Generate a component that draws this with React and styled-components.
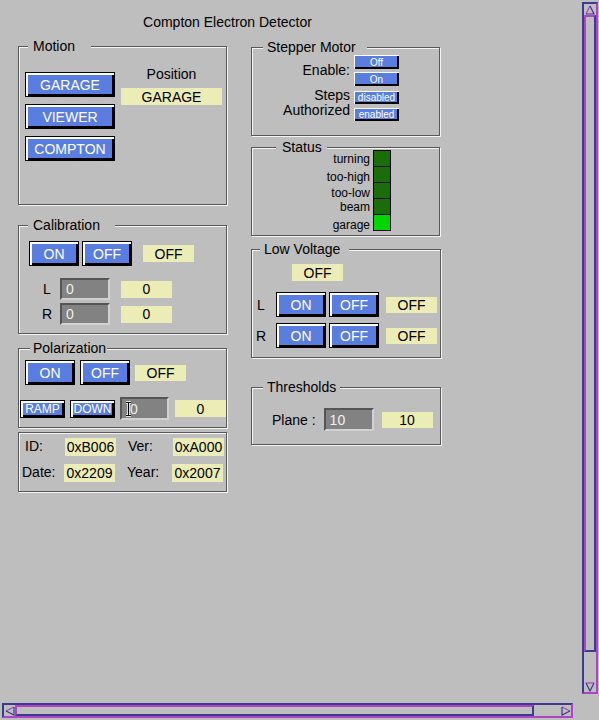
import styled, { createGlobalStyle } from "styled-components";

const NAVY = "#3b3b91";
const PINK = "#b044c4";

const GlobalStyle = createGlobalStyle`
  html, body {
    margin: 0;
    padding: 0;
    background: #bebebe;
  }
  body {
    font-family: "Liberation Sans", Arial, sans-serif;
    overflow: hidden;
  }
`;

const Screen = styled.div`
  width: 599px;
  height: 720px;
  background: #bebebe;
  display: grid;
  grid-template-columns: 582px 17px;
  grid-template-rows: 703px 17px;
  overflow: hidden;
  color: #000;
  font-size: 14px;
`;

const Panel = styled.div`
  grid-column: 1;
  grid-row: 1;
`;

const Title = styled.div`
  width: 455px;
  padding-top: 14px;
  line-height: 16px;
  text-align: center;
`;

const Columns = styled.div`
  display: flex;
  align-items: flex-start;
  gap: 24px;
  padding-left: 18px;
  margin-top: 16px;
`;

const Column = styled.div`
  display: flex;
  flex-direction: column;
  margin-top: ${p => p.$mt || 0}px;
`;

const Group = styled.div`
  position: relative;
  box-sizing: border-box;
  width: ${p => p.$w}px;
  height: ${p => p.$h}px;
  margin-top: ${p => p.$mt || 0}px;
  padding: ${p => p.$pad};
  border: 1px solid #585858;
  box-shadow: 1px 1px 0 #f4f4f4, inset 1px 1px 0 #f4f4f4;
`;

const Legend = styled.span`
  position: absolute;
  top: -9px;
  left: ${p => p.$x}px;
  padding: 0 ${p => p.$pr}px 0 ${p => p.$pl}px;
  background: #bebebe;
  line-height: 16px;
  white-space: nowrap;
`;

const Btn = styled.button`
  box-sizing: border-box;
  width: ${p => p.$w}px;
  height: ${p => p.$h}px;
  padding: 0;
  display: flex;
  align-items: center;
  justify-content: center;
  flex-shrink: 0;
  background: #5a7de0;
  color: #fff;
  font-family: inherit;
  font-size: ${p => p.$fs || 14}px;
  border: 1px solid #000;
  border-radius: 0;
  box-shadow: inset 2px 2px 0 #fff, inset -2px -2px 0 #000;
`;

const SmallBtn = styled(Btn)`
  border: none;
  font-size: 10px;
  box-shadow: inset 1px 1px 0 #fff, inset -2px -2px 0 #000;
`;

const Readout = styled.div`
  box-sizing: border-box;
  width: ${p => p.$w || 51}px;
  height: ${p => p.$h || 17}px;
  margin-left: ${p => p.$ml || 0}px;
  flex-shrink: 0;
  display: flex;
  align-items: center;
  justify-content: center;
  background: #ececb6;
`;

const Entry = styled.div`
  box-sizing: border-box;
  width: ${p => p.$w || 50}px;
  height: ${p => p.$h || 22}px;
  margin-left: ${p => p.$ml || 0}px;
  flex-shrink: 0;
  display: flex;
  align-items: center;
  padding-left: 4px;
  background: #828282;
  color: #f0f0f0;
  border: 2px solid;
  border-color: #555 #d2d2d2 #d2d2d2 #555;
`;

const Row = styled.div`
  display: flex;
  align-items: center;
  gap: ${p => p.$gap || 0}px;
  margin-top: ${p => p.$mt || 0}px;
  margin-left: ${p => p.$ml || 0}px;
`;

const RowLabel = styled.div`
  width: ${p => p.$w}px;
  text-align: center;
  flex-shrink: 0;
`;

/* Motion */
const MotionBody = styled.div`
  display: flex;
  align-items: flex-start;
  gap: 6px;
`;

const BtnStack = styled.div`
  display: flex;
  flex-direction: column;
  gap: ${p => p.$gap}px;
`;

const PositionCol = styled.div`
  display: flex;
  flex-direction: column;
  align-items: center;
  gap: 6px;
  margin-top: -6px;
  line-height: 16px;
`;

/* Stepper */
const StepperGrid = styled.div`
  display: grid;
  grid-template-columns: 98px 45px;
  column-gap: 4px;
  row-gap: 5px;
`;

const StepLabel = styled.div`
  text-align: right;
  line-height: 15px;
  align-self: ${p => (p.$top ? "start" : "center")};
  margin-top: ${p => (p.$top ? -3 : 0)}px;
`;

/* Status */
const StatusBody = styled.div`
  display: flex;
  gap: 3px;
`;

const StatusLabels = styled.div`
  width: 118px;
  display: flex;
  flex-direction: column;
  text-align: right;
  font-size: 12px;
`;

const StatusLabel = styled.div`
  height: ${p => p.$h}px;
  line-height: ${p => p.$h}px;
`;

const Leds = styled.div`
  display: flex;
  flex-direction: column;
`;

const Led = styled.div`
  box-sizing: border-box;
  width: 18px;
  height: 17px;
  border: 1px solid #000;
  background: ${p => (p.$on ? "#00d600" : "#1a6e0a")};
  & + & {
    margin-top: -1px;
  }
`;

/* ID box */
const IdGrid = styled.div`
  display: grid;
  grid-template-columns: 42px 51px 58px 51px;
  row-gap: 8px;
  align-items: center;
`;

const IdLabel = styled.div`
  padding-left: ${p => p.$pl || 0}px;
  margin-top: -2px;
`;

/* scrollbars */
const VBar = styled.div`
  grid-column: 2;
  grid-row: 1;
  box-sizing: border-box;
  width: 16px;
  height: 692px;
  margin-top: 2px;
  display: flex;
  flex-direction: column;
  border: 2px solid;
  border-color: ${NAVY} ${PINK} ${PINK} ${NAVY};
`;

const HBar = styled.div`
  grid-column: 1;
  grid-row: 2;
  box-sizing: border-box;
  width: 571px;
  height: 15px;
  margin-left: 2px;
  display: flex;
  border: 2px solid;
  border-color: ${NAVY} ${PINK} ${PINK} ${NAVY};
`;

const Thumb = styled.div`
  box-sizing: border-box;
  flex: 0 0 ${p => p.$len}px;
  border: 2px solid;
  border-color: ${PINK} ${NAVY} ${NAVY} ${PINK};
`;

const ArrowBox = styled.div`
  flex: 0 0 11px;
  display: flex;
  align-items: center;
  justify-content: center;
`;

const Spacer = styled.div`
  flex: 1;
`;

function Arrow({ dir }) {
  const shapes = {
    up: [["1,9 5,1", PINK], ["5,1 9,9 1,9", NAVY]],
    down: [["1,1 9,1", PINK], ["1,1 5,9 9,1", NAVY]],
    left: [["9,1 1,5", PINK], ["1,5 9,9 9,1", NAVY]],
    right: [["1,1 9,5", PINK], ["9,5 1,9 1,1", NAVY]],
  };
  return (
    <ArrowBox>
      <svg width="10" height="10" viewBox="0 0 10 10">
        {shapes[dir].map(([pts, c], i) => (
          <polyline key={i} points={pts} fill="none" stroke={c} strokeWidth="1.2" />
        ))}
      </svg>
    </ArrowBox>
  );
}

function IBeam() {
  return (
    <svg width="7" height="16" viewBox="0 0 7 16" style={{ marginLeft: -1, marginRight: -2 }}>
      <path d="M1 1.5h5M1 14.5h5M3.5 1.5v13" stroke="#fff" strokeWidth="2.4" fill="none" />
      <path d="M1 1.5h5M1 14.5h5M3.5 1.5v13" stroke="#000" strokeWidth="1" fill="none" />
    </svg>
  );
}

export default function App() {
  return (
    <>
      <GlobalStyle />
      <Screen>
        <Panel>
          <Title>Compton Electron Detector</Title>
          <Columns>
            <Column>
              <Group $w={209} $h={159} $pad="25px 0 0 6px">
                <Legend $x={9} $pl={5} $pr={16}>Motion</Legend>
                <MotionBody>
                  <BtnStack $gap={7}>
                    <Btn $w={90} $h={25}>GARAGE</Btn>
                    <Btn $w={90} $h={25}>VIEWER</Btn>
                    <Btn $w={90} $h={25}>COMPTON</Btn>
                  </BtnStack>
                  <PositionCol>
                    <div>Position</div>
                    <Readout $w={101} $h={17}>GARAGE</Readout>
                  </PositionCol>
                </MotionBody>
              </Group>

              <Group $w={209} $h={109} $mt={20} $pad="15px 0 0 10px">
                <Legend $x={9} $pl={5} $pr={15}>Calibration</Legend>
                <Row $gap={3}>
                  <Btn $w={50} $h={25}>ON</Btn>
                  <Btn $w={50} $h={25}>OFF</Btn>
                  <Readout $ml={8}>OFF</Readout>
                </Row>
                <Row $mt={12} $ml={8}>
                  <RowLabel $w={20}>L</RowLabel>
                  <Entry $ml={3}>0</Entry>
                  <Readout $ml={11}>0</Readout>
                </Row>
                <Row $mt={3} $ml={8}>
                  <RowLabel $w={20}>R</RowLabel>
                  <Entry $ml={3}>0</Entry>
                  <Readout $ml={11}>0</Readout>
                </Row>
              </Group>

              <Group $w={209} $h={80} $mt={14} $pad="11px 0 0 6px">
                <Legend $x={11} $pl={3} $pr={1}>Polarization</Legend>
                <Row $gap={5}>
                  <Btn $w={50} $h={25}>ON</Btn>
                  <Btn $w={50} $h={25}>OFF</Btn>
                  <Readout $h={16}>OFF</Readout>
                </Row>
                <Row $gap={5} $mt={12} $ml={-5}>
                  <Btn $w={45} $h={18} $fs={12}>RAMP</Btn>
                  <Btn $w={45} $h={18} $fs={12}>DOWN</Btn>
                  <Entry $w={49} $h={23}>
                    <IBeam />0
                  </Entry>
                  <Readout $ml={1}>0</Readout>
                </Row>
              </Group>

              <Group $w={209} $h={60} $mt={4} $pad="5px 0 0 3px">
                <IdGrid>
                  <IdLabel $pl={3}>ID:</IdLabel>
                  <Readout $h={18} $ml={1}>0xB006</Readout>
                  <IdLabel $pl={13}>Ver:</IdLabel>
                  <Readout $h={18}>0xA000</Readout>
                  <IdLabel>Date:</IdLabel>
                  <Readout $h={18}>0x2209</Readout>
                  <IdLabel $pl={12}>Year:</IdLabel>
                  <Readout $h={18} $ml={-1}>0x2007</Readout>
                </IdGrid>
              </Group>
            </Column>

            <Column $mt={1}>
              <Group $w={189} $h={89} $pad="7px 0 0 0">
                <Legend $x={11} $pl={4} $pr={11}>Stepper Motor</Legend>
                <StepperGrid>
                  <StepLabel>Enable:</StepLabel>
                  <BtnStack $gap={3}>
                    <SmallBtn $w={45} $h={14}>Off</SmallBtn>
                    <SmallBtn $w={45} $h={14}>On</SmallBtn>
                  </BtnStack>
                  <StepLabel $top>
                    Steps
                    <br />
                    Authorized
                  </StepLabel>
                  <BtnStack $gap={4}>
                    <SmallBtn $w={45} $h={13}>disabled</SmallBtn>
                    <SmallBtn $w={45} $h={13}>enabled</SmallBtn>
                  </BtnStack>
                </StepperGrid>
              </Group>

              <Group $w={189} $h={89} $mt={11} $pad="2px 0 0 0">
                <Legend $x={24} $pl={6} $pr={5}>Status</Legend>
                <StatusBody>
                  <StatusLabels>
                    <StatusLabel $h={18}>turning</StatusLabel>
                    <StatusLabel $h={18}>too-high</StatusLabel>
                    <StatusLabel $h={14}>too-low</StatusLabel>
                    <StatusLabel $h={14}>beam</StatusLabel>
                    <StatusLabel $h={22}>garage</StatusLabel>
                  </StatusLabels>
                  <Leds>
                    <Led />
                    <Led />
                    <Led />
                    <Led />
                    <Led $on />
                  </Leds>
                </StatusBody>
              </Group>

              <Group $w={190} $h={109} $mt={13} $pad="14px 0 0 0">
                <Legend $x={8} $pl={4} $pr={9}>Low Voltage</Legend>
                <Readout $ml={40}>OFF</Readout>
                <Row $mt={11}>
                  <RowLabel $w={18}>L</RowLabel>
                  <Row $gap={3} $ml={6}>
                    <Btn $w={50} $h={25}>ON</Btn>
                    <Btn $w={50} $h={25}>OFF</Btn>
                  </Row>
                  <Readout $ml={7} $h={16}>OFF</Readout>
                </Row>
                <Row $mt={6}>
                  <RowLabel $w={18}>R</RowLabel>
                  <Row $gap={3} $ml={6}>
                    <Btn $w={50} $h={25}>ON</Btn>
                    <Btn $w={50} $h={25}>OFF</Btn>
                  </Row>
                  <Readout $ml={7} $h={16}>OFF</Readout>
                </Row>
              </Group>

              <Group $w={190} $h={58} $mt={29} $pad="20px 0 0 20px">
                <Legend $x={11} $pl={4} $pr={4}>Thresholds</Legend>
                <Row $gap={8}>
                  <div>Plane :</div>
                  <Entry $w={50} $h={23}>10</Entry>
                  <Readout $h={16}>10</Readout>
                </Row>
              </Group>
            </Column>
          </Columns>
        </Panel>

        <VBar>
          <Arrow dir="up" />
          <Thumb $len={637} />
          <Spacer />
          <Arrow dir="down" />
        </VBar>

        <HBar>
          <Arrow dir="left" />
          <Thumb $len={519} />
          <Spacer />
          <Arrow dir="right" />
        </HBar>
      </Screen>
    </>
  );
}
